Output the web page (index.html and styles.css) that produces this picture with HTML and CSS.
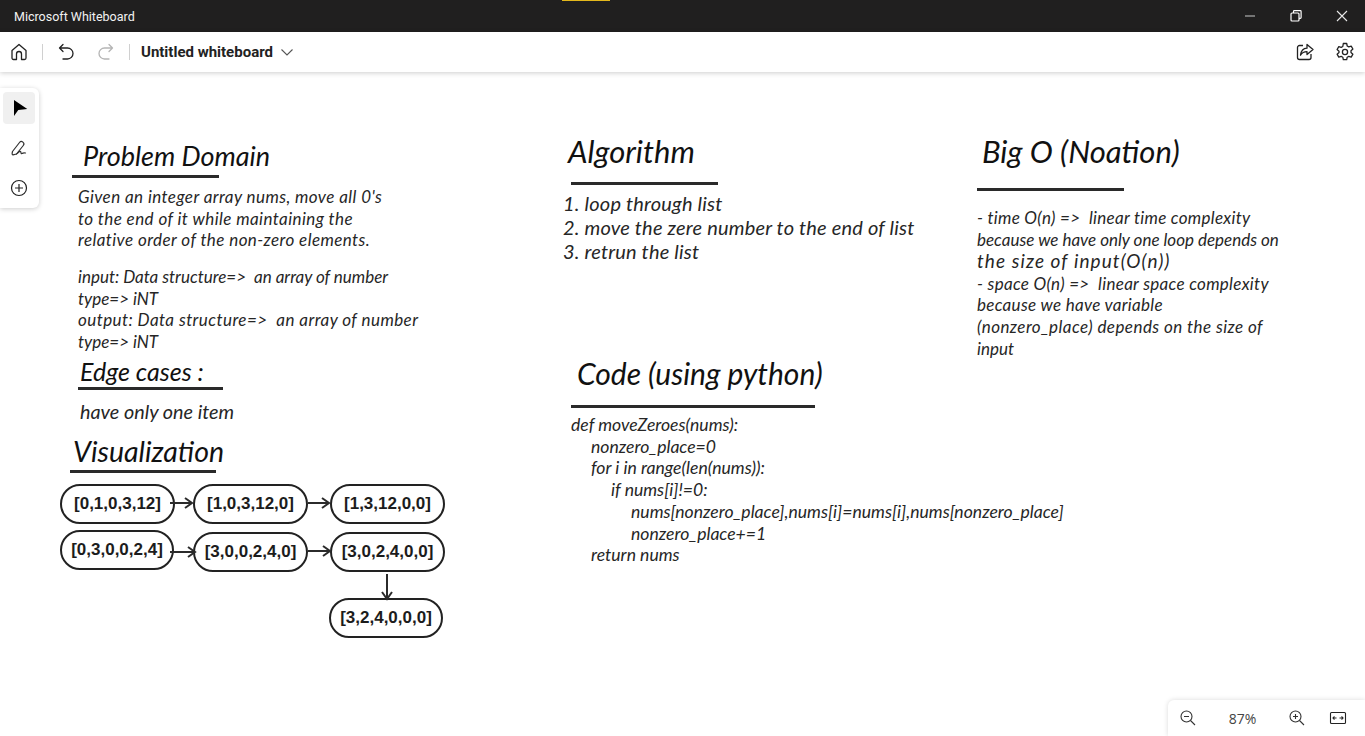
FILE: index.html
```html
<!DOCTYPE html>
<html lang="en">
<head>
  <meta charset="UTF-8">
  <title>Microsoft Whiteboard</title>
  <link rel="stylesheet" href="styles.css">
</head>
<body>
  <div class="titlebar">
    <span class="app-name">Microsoft Whiteboard</span>
    <span class="notch"></span>
    <div class="win-buttons">
      <svg width="16" height="16" viewBox="0 0 16 16"><path d="M3 8h10" stroke="#9a9a9a" stroke-width="1.4"/></svg>
      <svg width="16" height="16" viewBox="0 0 16 16" fill="none" stroke="#fff" stroke-width="1.2"><rect x="3" y="5" width="8" height="8" rx="1"/><path d="M5.500 5V3.500a.8.8 0 0 1 .8-.8h6a.8.8 0 0 1 .8.8v6a.8.8 0 0 1-.8.8H11"/></svg>
      <svg width="16" height="16" viewBox="0 0 16 16"><path d="M3 3l10 10M13 3L3 13" stroke="#e8e8e8" stroke-width="1.1"/></svg>
    </div>
  </div>

  <div class="toolbar">
    <svg class="ic" width="20" height="20" viewBox="0 0 20 20" fill="none" stroke="#222" stroke-width="1.3" stroke-linejoin="round"><path d="M3 8.500L10 2.500l7 6V16a1.500 1.500 0 0 1-1.500 1.500h-3V12a2.500 2.500 0 0 0-5 0v5.500h-3A1.500 1.500 0 0 1 3 16z"/></svg>
    <span class="sep"></span>
    <svg class="ic undo" width="20" height="20" viewBox="0 0 20 20" fill="none" stroke="#222" stroke-width="1.3" stroke-linecap="round" stroke-linejoin="round"><path d="M7 2.500L3.500 6 7 9.500M3.500 6h8a4.500 4.500 0 0 1 0 11H7"/></svg>
    <svg class="ic redo" width="20" height="20" viewBox="0 0 20 20" fill="none" stroke="#b5b5b5" stroke-width="1.3" stroke-linecap="round" stroke-linejoin="round"><path d="M13 2.500L16.500 6 13 9.500M16.500 6h-8a4.500 4.500 0 0 0 0 11H13"/></svg>
    <span class="sep"></span>
    <span class="board-name">Untitled whiteboard</span>
    <svg class="chev" width="14" height="14" viewBox="0 0 14 14" fill="none" stroke="#555" stroke-width="1.1"><path d="M1.500 4.500L7 10l5.500-5.500"/></svg>
    <div class="toolbar-right">
      <svg width="20" height="20" viewBox="0 0 20 20" fill="none" stroke="#222" stroke-width="1.300" stroke-linejoin="round"><path d="M8 3.500H4.500a2 2 0 0 0-2 2v10a2 2 0 0 0 2 2h9.500a2 2 0 0 0 2-2V12"/><path d="M12 2.500l6 5-6 5V9.700c-3 0-5 1-6.500 3.500.5-4 2.500-6.800 6.500-7z"/></svg>
      <svg width="20" height="20" viewBox="0 0 20 20" fill="none" stroke="#222" stroke-width="1.300" stroke-linejoin="round"><circle cx="10" cy="10" r="2.600"/><path d="M8.300 1.500h3.400l.5 2.500 1.600.9 2.400-.8 1.700 2.900-1.900 1.700v1.800l1.900 1.700-1.700 2.900-2.400-.8-1.600.9-.5 2.500H8.300l-.5-2.500-1.600-.9-2.400.8-1.700-2.900 1.900-1.700V9.200L2.100 7.500l1.700-2.900 2.400.8 1.600-.9z"/></svg>
    </div>
  </div>

  <div class="board">
    <div class="tools">
      <div class="tool active">
        <svg width="18" height="18" viewBox="0 0 18 18"><path d="M4 1l13.300 9-9 1L4 17z" fill="#000"/></svg>
      </div>
      <div class="tool">
        <svg width="20" height="20" viewBox="0 0 20 20" fill="none" stroke="#333" stroke-width="1.200" stroke-linejoin="round" stroke-linecap="round"><path d="M3.500 13.500L10.500 4.500a2.400 2.400 0 0 1 3.800 3L7.500 16l-3.500.8c-.9.1-1.200-.6-.5-3.300z"/><path d="M7.500 16c2-1 3-3.500 4-2.500s0 2.500 1.500 2 1.500-1 3.500-.5"/></svg>
      </div>
      <div class="tool">
        <svg width="18" height="18" viewBox="0 0 18 18" fill="none" stroke="#222" stroke-width="1.200"><circle cx="9" cy="9" r="7.500"/><path d="M9 5v8M5 9h8"/></svg>
      </div>
    </div>

    <div class="hand h-title t-problem">Problem Domain</div>
    <hr class="rule r-problem">
    <div class="hand t-given">Given an integer array nums, move all 0's<br>to the end of it while maintaining the<br>relative order of the non-zero elements.</div>
    <div class="hand t-io">input: Data structure=&gt;&nbsp; an array of number<br>type=&gt; iNT<br><span class="sp-2">output: Data structure=&gt;&nbsp; an array of number</span><br>type=&gt; iNT</div>

    <div class="hand h-sub t-edge">Edge cases :</div>
    <hr class="rule r-edge">
    <div class="hand t-item">have only one item</div>

    <div class="hand h-viz t-viz">Visualization</div>
    <hr class="rule r-viz">

    <div class="node n1">[0,1,0,3,12]</div>
    <div class="node n2">[1,0,3,12,0]</div>
    <div class="node n3">[1,3,12,0,0]</div>
    <div class="node n4">[0,3,0,0,2,4]</div>
    <div class="node n5">[3,0,0,2,4,0]</div>
    <div class="node n6">[3,0,2,4,0,0]</div>
    <div class="node n7">[3,2,4,0,0,0]</div>
    <svg class="arrows" width="460" height="170" viewBox="0 0 460 170" fill="none" stroke="#2b2b2b" stroke-width="2">
      <path d="M170 33h22M185 28l7 5-7 5"/>
      <path d="M308 33h21M322 28l7 5-7 5"/>
      <path d="M170 82h25M188 77l7 5-7 5"/>
      <path d="M308 81h22M323 76l7 5-7 5"/>
      <path d="M387 104v25M382 122l5 7 5-7"/>
    </svg>

    <div class="hand h-title t-algo">Algorithm</div>
    <hr class="rule r-algo">
    <div class="hand t-steps">1. loop through list<br>2. move the zere number to the end of list<br>3. retrun the list</div>

    <div class="hand h-title t-code">Code (using python)</div>
    <hr class="rule r-code">
    <div class="hand t-src">
      <div>def moveZeroes(nums):</div>
      <div class="in-1">nonzero_place=0</div>
      <div class="in-1">for i in range(len(nums)):</div>
      <div class="in-2">if nums[i]!=0:</div>
      <div class="in-3">nums[nonzero_place],nums[i]=nums[i],nums[nonzero_place]</div>
      <div class="in-3">nonzero_place+=1</div>
      <div class="in-1">return nums</div>
    </div>

    <div class="hand h-title t-big">Big O (Noation)</div>
    <hr class="rule r-big">
    <div class="hand t-notes"><span class="sp-1">- time O(n) =&gt;&nbsp; linear time complexity</span><br>because we have only one loop depends on<br><span class="sp-4">the size of input(O(n))</span><br><span class="sp-1">- space O(n) =&gt;&nbsp; linear space complexity</span><br><span class="sp-1">because we have variable</span><br><span class="sp-2">(nonzero_place) depends on the size of</span><br>input</div>

    <div class="zoom">
      <svg width="18" height="18" viewBox="0 0 18 18" fill="none" stroke="#333" stroke-width="1.100"><circle cx="7.500" cy="7.500" r="5.500"/><path d="M5 7.500h5M11.500 11.500L16 16"/></svg>
      <span class="zoom-val">87%</span>
      <svg width="18" height="18" viewBox="0 0 18 18" fill="none" stroke="#333" stroke-width="1.100"><circle cx="7.500" cy="7.500" r="5.500"/><path d="M5 7.500h5M7.500 5v5M11.500 11.500L16 16"/></svg>
      <svg width="18" height="18" viewBox="0 0 18 18" fill="none" stroke="#222" stroke-width="1.100"><rect x="1.500" y="3.500" width="15" height="11" rx="1"/><path d="M4 9h3.500M10.500 9H14"/><path d="M5.500 7.500L4 9l1.500 1.500M12.500 7.500L14 9l-1.500 1.500"/></svg>
    </div>
  </div>
</body>
</html>
```

FILE: styles.css
```css
* {
  box-sizing: border-box;
}

body {
  margin: 0;
  width: 1365px;
  height: 736px;
  overflow: hidden;
  background: #fff;
  display: flex;
  flex-direction: column;
  font-family: "Open Sans", sans-serif;
}

.titlebar {
  height: 32px;
  background: #201f1f;
  color: #f2f2f2;
  display: flex;
  align-items: center;
  padding-left: 14px;
  font-family: "Roboto", sans-serif;
  font-size: 12.500px;
  position: relative;
}

.notch {
  position: absolute;
  left: 562px;
  top: 0;
  width: 48px;
  height: 1px;
  background: #e3b71c;
}

.win-buttons {
  margin-left: auto;
  display: flex;
  gap: 30px;
  padding-right: 15px;
}

.toolbar {
  height: 40px;
  background: #fff;
  display: flex;
  align-items: center;
  padding-left: 9px;
  box-shadow: 0 1px 5px rgba(0, 0, 0, 0.2);
  position: relative;
  z-index: 2;
}

.sep {
  width: 1px;
  height: 16px;
  background: #d0d0d0;
  margin: 0 13px;
}

.redo {
  margin-left: 20px;
}

.board-name {
  font-family: "Roboto", sans-serif;
  font-weight: 700;
  font-size: 15px;
  color: #222;
  margin-left: -2px;
}

.chev {
  margin-left: 7px;
}

.toolbar-right {
  margin-left: auto;
  display: flex;
  gap: 20px;
  padding-right: 10px;
}

.board {
  flex: 1;
  position: relative;
}

.tools {
  position: absolute;
  left: 0;
  top: 16px;
  width: 39px;
  height: 120px;
  background: #fff;
  border-radius: 0 6px 6px 0;
  box-shadow: 0 1px 5px rgba(0, 0, 0, 0.2);
  padding: 4px 3px;
  display: flex;
  flex-direction: column;
  gap: 8px;
}

.tool {
  width: 32px;
  height: 32px;
  border-radius: 4px;
  display: flex;
  align-items: center;
  justify-content: center;
}

.tool.active {
  background: #f0f0f0;
}

.hand {
  position: absolute;
  margin: 0;
  font-family: "Lato", sans-serif;
  font-style: italic;
  font-size: 17px;
  line-height: 21.500px;
  color: #262626;
  white-space: nowrap;
}

.h-title {
  font-size: 31px;
  line-height: 36px;
  color: #111;
}

.h-sub {
  font-size: 25px;
  line-height: 30px;
  color: #111;
}

.h-viz {
  font-size: 28.500px;
  line-height: 32px;
  color: #111;
}

.rule {
  position: absolute;
  margin: 0;
  border: 0;
  height: 3px;
  background: #2a2a2a;
}

.sp-1 { letter-spacing: 0.3px; }
.sp-2 { letter-spacing: 0.44px; }
.sp-4 { font-size: 19px; letter-spacing: 1.100px; }

.t-problem { left: 83px; top: 66px; font-size: 27px; }
.r-problem { left: 72px; top: 103px; width: 147px; }
.t-given { left: 78px; top: 114px; letter-spacing: 0.42px; }
.t-io { left: 78px; top: 194px; }
.t-edge { left: 80px; top: 284px; }
.r-edge { left: 78px; top: 315px; width: 145px; }
.t-item { left: 80px; top: 329px; font-size: 19.800px; }
.t-viz { left: 73px; top: 363px; }
.r-viz { left: 70px; top: 398px; width: 146px; }

.node {
  position: absolute;
  width: 115px;
  height: 40px;
  border: 2px solid #222;
  border-radius: 20px;
  background: #fff;
  display: flex;
  align-items: center;
  justify-content: center;
  font-family: "Liberation Sans", Arial, sans-serif;
  font-weight: 700;
  font-size: 17px;
  color: #1c1c1c;
}

.n1 { left: 60px; top: 412px; }
.n2 { left: 193px; top: 412px; }
.n3 { left: 330px; top: 412px; }
.n4 { left: 60px; top: 458px; width: 114px; }
.n5 { left: 193px; top: 460px; }
.n6 { left: 330px; top: 460px; }
.n7 { left: 329px; top: 526px; width: 114px; }

.arrows {
  position: absolute;
  left: 0;
  top: 398px;
}

.t-algo { left: 568px; top: 61px; }
.r-algo { left: 571px; top: 110px; width: 147px; }
.t-steps { left: 563px; top: 119px; font-size: 20px; line-height: 24px; letter-spacing: 0.2px; }
.t-code { left: 577px; top: 283px; font-size: 30px; }
.r-code { left: 571px; top: 333px; width: 244px; }
.t-src { left: 571px; top: 342px; line-height: 21.700px; font-size: 17.600px; }
.in-1 { padding-left: 20px; }
.in-2 { padding-left: 40px; }
.in-3 { padding-left: 60px; }
.t-big { left: 982px; top: 61px; }
.r-big { left: 977px; top: 116px; width: 147px; }
.t-notes { left: 977px; top: 135px; line-height: 21.600px; }

.zoom {
  position: absolute;
  right: 0;
  bottom: 0;
  width: 197px;
  height: 36px;
  background: #fff;
  border-radius: 6px 0 0 0;
  box-shadow: 0 0 5px rgba(0, 0, 0, 0.15);
  display: flex;
  align-items: center;
  padding-left: 11px;
  color: #444;
  font-size: 14px;
}

.zoom-val {
  width: 91px;
  text-align: center;
}

.zoom svg:last-child {
  margin-left: 23px;
}
```
